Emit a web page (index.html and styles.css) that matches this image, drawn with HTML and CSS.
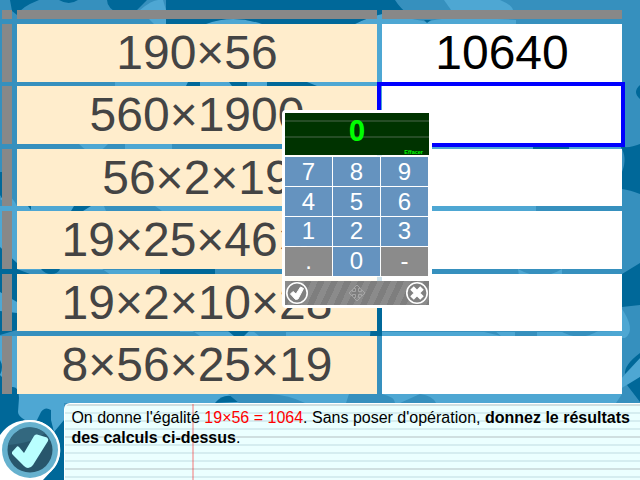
FILE: index.html
```
<!DOCTYPE html>
<html lang="fr">
<head>
<meta charset="utf-8">
<title>Calculs</title>
<link rel="stylesheet" href="styles.css">
</head>
<body>
<svg class="backdrop" viewBox="0 0 640 480" aria-hidden="true">
  <rect width="640" height="480" fill="#3690be"/>
  <g fill="#4ea7d3">
    <path d="M140 10Q152 0 158 0L163 0L166 10V24H154L140 90H115V82L154 24Z"/>
    <path d="M262 90V24H355Q369 17 382 14Q420 20 427 22Q445 15 516 20V160H300ZM120 82H267V86H120ZM205 24Q232 14 262 24Z"/>
    <path d="M444 0H500Q512 5 513 10H451Z"/>
    <path d="M79 144Q94 160 108 144ZM125 149V144H172V149Z"/>
    <path d="M382 144H625V150H382ZM0 199Q9 190 17 206H540L530 220H382V250H17V270H165L180 290V332H560L622 331V394L616 403H0V336H200Z"/>
    <path d="M0 206H17V270L0 250Z"/>
    <path d="M518 269Q541 282 562 269V276H519ZM620 306Q637 330 625 338H610Z"/>
    <path d="M620 380L640 358V377L620 389ZM0 394H64V450H0Z"/>
  </g>
  <g fill="#006899">
    <path d="M10 0H39Q21 7 17 15L12 11ZM59 0H78Q69 6 59 0ZM107 0H147L133 14H119Q107 8 107 0Z"/>
    <path d="M166 0H395Q400 8 408 14H382Q369 17 355 24H262Q233 14 206 24H166ZM424 20H431L427 23Z"/>
    <path d="M188 82H200V86H186ZM229 82H247V86H232ZM267 82H307L317 86H267Z"/>
    <path d="M640 85Q632 92 640 99ZM640 144V194Q630 190 622 189V172Q628 157 620 146Q628 149 640 144ZM533 144H569V149H533Z"/>
    <path d="M0 172H2V198L0 195ZM28 206H31V210ZM71 211L74 206H91L83 211ZM0 247L17 263V269L30 274H17V330L0 335ZM41 269H60Q58 274 51 274Q45 274 41 269Z"/>
    <path d="M160 269H215V274H160ZM376 269H382V336H370ZM228 331H249L244 336H234Z"/>
    <path d="M622 274L640 263V305L622 307ZM640 353Q624 365 625 374L640 358ZM627 385L640 377V402Z"/>
    <path d="M12 387Q19 386 19 398L18 412Q18 416 25 420H37L41 412Q45 406 51 410L51 420L54 432L64 420V480H0V360Q4 367 0 375Z"/>
    <path d="M215 403Q222 394 232 396L239 402Z"/>
  </g>
  <g fill="#3690be">
    <path d="M104 206H155L162 211H106ZM382 269H518V274H382ZM562 269H622V274H562ZM536 206H622V211H536Z"/>
    <path d="M253 331H286V336H259ZM377 336H382V394H377ZM495 331H480L501 336ZM515 331H537V336H515ZM560 331H598Q580 342 560 331Z"/>
    <path d="M228 394H270Q289 395 305 403H239ZM349 394H382Q395 397 395 403H346ZM420 394Q433 396 436 403H400Z"/>
  </g>
  <path d="M0 292L17 302V313L0 311Z" fill="#4ea7d3"/>
</svg>

<div class="page">
  <main class="sheet">
    <div class="head"></div><div class="head"></div><div class="head"></div>
    <div class="head snug"></div><div class="question snug">190×56</div><div class="answer snug">10640</div>
    <div class="head"></div><div class="question">560×1900</div><div class="answer selected"></div>
    <div class="head"></div><div class="question">56×2×19</div><div class="answer"></div>
    <div class="head"></div><div class="question">19×25×46×4</div><div class="answer"></div>
    <div class="head"></div><div class="question">19×2×10×28</div><div class="answer"></div>
    <div class="head"></div><div class="question">8×56×25×19</div><div class="answer"></div>
  </main>
  <footer class="footer">
    <svg class="validate" viewBox="0 0 64 77">
      <path d="M0 32Q10 17 30 17A30 30 0 0 1 55 64L43 77H0Z" fill="#fff"/>
      <circle cx="30" cy="47" r="30" fill="#fff"/>
      <circle cx="30" cy="47" r="28" fill="#66b1ce"/>
      <circle cx="30" cy="47" r="22.5" fill="#28566c"/>
      <path d="M8 42A22.5 22.5 0 0 1 45 30Q36 39 8 42Z" fill="#33687f"/>
      <path d="M12 49L17 43.500Q18 43 19 44L24 50L34 33Q35 31 37 31.500L47 34.500Q49 36 48 38L33 62Q31 65 28 65Q26 65 24 63L13 52Q11.500 51 12 49Z" fill="#b9ffff"/>
    </svg>
    <div class="note">
      <p>On donne l'égalité <span class="given">19×56 = 1064</span>. Sans poser d'opération, <b>donnez le résultats des calculs ci-dessus</b>.</p>
    </div>
  </footer>
</div>

<div class="keypad">
  <div class="display"><span class="value">0</span><span class="clear">Effacer</span></div>
  <div class="keys">
    <div class="key">7</div><div class="key">8</div><div class="key">9</div>
    <div class="key">4</div><div class="key">5</div><div class="key">6</div>
    <div class="key low">1</div><div class="key low">2</div><div class="key low">3</div>
    <div class="key low off">.</div><div class="key low">0</div><div class="key low off">-</div>
  </div>
  <div class="bar">
    <svg width="24" height="24" viewBox="0 0 24 24">
      <circle cx="12" cy="12" r="10.200" fill="#808080" stroke="#fff" stroke-width="1.600"/>
      <path d="M5.500 13L8 10.500L11 13L15.500 6L18.500 7.500L13 18L10.500 18.500Z" fill="#fff" stroke="#fff" stroke-linejoin="round"/>
    </svg>
    <svg width="18" height="18" viewBox="0 0 18 18" fill="none" stroke="#a9a9a9" stroke-width=".9">
      <path d="M9 1L12.500 4.500H10.500V7.500H13.500V5.500L17 9L13.500 12.500V10.500H10.500V13.500H12.500L9 17L5.500 13.500H7.500V10.500H4.500V12.500L1 9L4.500 5.500V7.500H7.500V4.500H5.500Z" stroke-linejoin="round"/>
    </svg>
    <svg width="24" height="24" viewBox="0 0 24 24">
      <circle cx="12" cy="12" r="10.200" fill="#808080" stroke="#fff" stroke-width="1.600"/>
      <path d="M7 7L17 17M17 7L7 17" stroke="#fff" stroke-width="5"/>
    </svg>
  </div>
</div>
</body>
</html>
```
FILE: styles.css
```
* {
  box-sizing: border-box;
}

body {
  margin: 0;
  width: 640px;
  height: 480px;
  overflow: hidden;
  font-family: "Liberation Sans", Arial, sans-serif;
}

.backdrop {
  position: absolute;
  inset: 0;
  width: 640px;
  height: 480px;
  z-index: -1;
}

.page {
  display: flex;
  flex-direction: column;
  height: 480px;
}

.sheet {
  display: grid;
  grid-template-columns: 10px 360px 240px;
  grid-template-rows: 14px 62px 63px 62px 63px 62px 63px;
  column-gap: 5px;
  height: 403px;
  padding: 10px 0 0 2px;
}

.head,
.question,
.answer {
  margin-bottom: 5px;
}

.head {
  background: #888;
}

.question,
.answer {
  font-size: 48px;
  line-height: 58px;
  text-align: center;
  white-space: nowrap;
}

.question {
  background: #ffedcc;
  color: #444;
}

.answer {
  position: relative;
  background: #fff;
  color: #000;
}

.snug {
  margin-bottom: 4px;
}

.selected::after {
  content: "";
  position: absolute;
  inset: -4px -3px -3px -5px;
  border: 4px solid #00f;
}

.footer {
  display: flex;
  height: 77px;
}

.validate {
  width: 64px;
  height: 77px;
}

.note {
  flex: 1;
  padding: 4px 0 0 6.4px;
  border-top: 1px solid #fff;
  border-left: 1px solid #fff;
  border-top-left-radius: 6px;
  background:
    linear-gradient(#ff000044, #ff000044) 127px 0 / 2px 100% no-repeat,
    repeating-linear-gradient(#cfdfe0 0 2px, transparent 2px 32px),
    repeating-linear-gradient(#d5edf0 0 2px, #ebffff 2px 8px);
}

.note p {
  margin: 0;
  font-size: 16px;
  line-height: 20px;
}

.given {
  color: #f00;
}

.keypad {
  position: absolute;
  left: 282px;
  top: 110px;
  width: 150px;
  height: 198px;
  border: 3px solid #fff;
  border-radius: 4px;
  background: rgba(255, 255, 255, .8);
}

.display {
  position: relative;
  height: 42px;
  background: linear-gradient(#030 7px, #264d26 7px 9px, #030 9px 23px, #264d26 23px 25px, #030 25px);
  color: #0f0;
  font-weight: bold;
  text-align: center;
}

.value {
  display: block;
  font-family: "Open Sans", sans-serif;
  font-size: 28px;
  line-height: 34px;
}

.clear {
  position: absolute;
  right: 6px;
  bottom: 0;
  font-size: 5.5px;
  line-height: 6px;
}

.keys {
  display: grid;
  grid-template-columns: repeat(3, 47px);
  grid-auto-rows: 29px;
  gap: 1px;
  width: 144px;
  height: 121px;
  margin-top: 1px;
  padding-top: 1px;
  background: rgba(255, 255, 255, .85);
}

.key {
  background: rgba(98, 145, 190, .98);
  color: #fff;
  font-size: 24px;
  line-height: 30px;
  text-align: center;
}

.key.low {
  line-height: 28px;
}

.key.off {
  background: rgba(137, 137, 137, .98);
}

.bar {
  display: flex;
  align-items: center;
  justify-content: space-between;
  height: 24px;
  margin-top: 4px;
  background: repeating-linear-gradient(115deg, #8b8b8b 0 6px, #7e7e7e 6px 12px);
}
```
